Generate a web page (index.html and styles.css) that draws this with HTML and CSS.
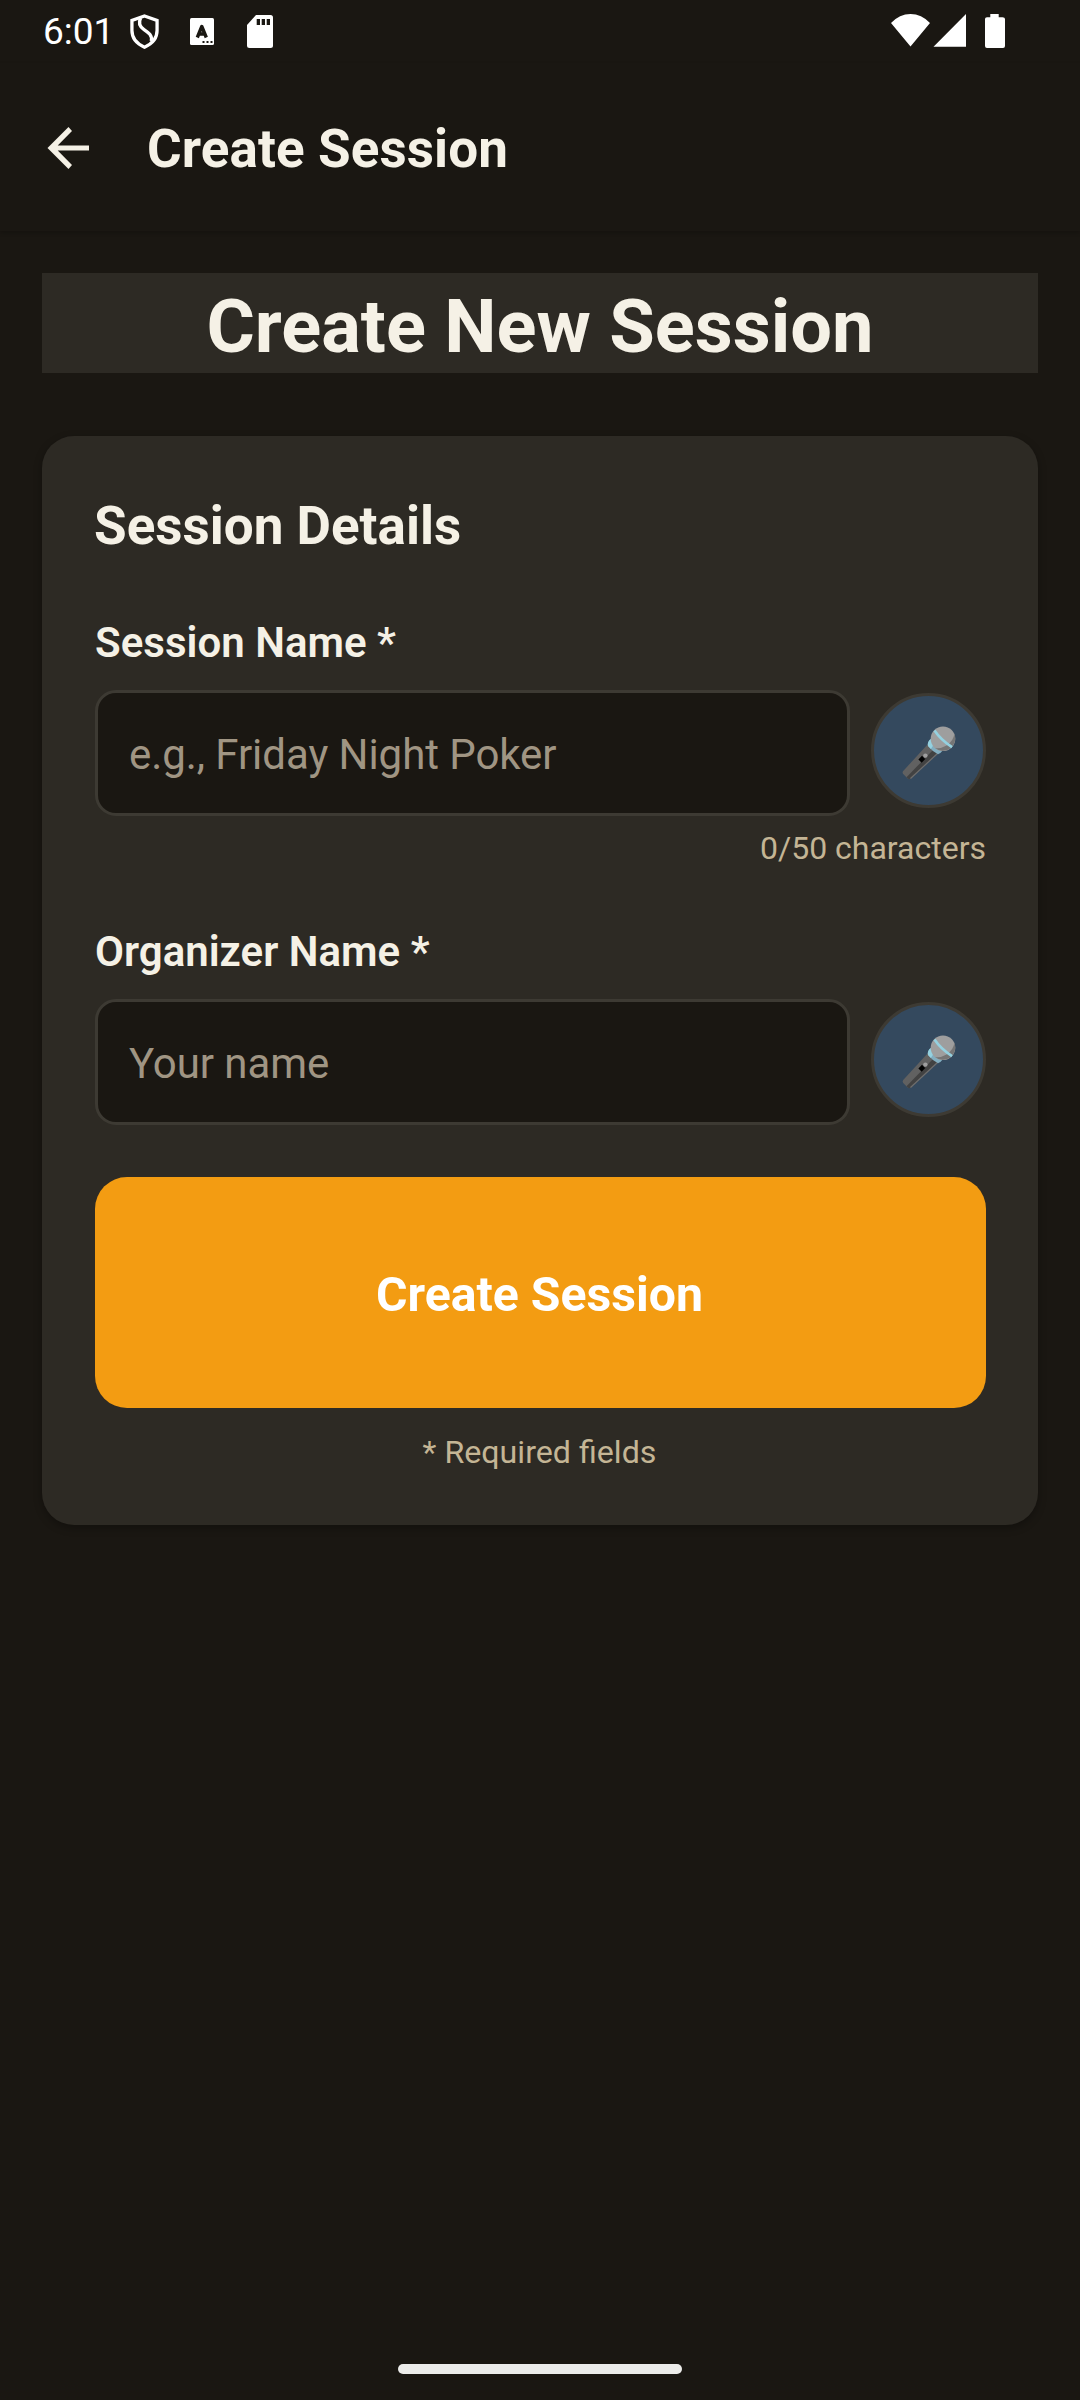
FILE: index.html
```html
<!DOCTYPE html>
<html lang="en">
<head>
<meta charset="utf-8">
<title>Create Session</title>
<link rel="stylesheet" href="styles.css">
</head>
<body>
<svg class="defs" aria-hidden="true">
  <symbol id="mic" viewBox="0 0 54 54">
    <path d="M26 18 1.200 45q-1.200 1.500 0 3l4.500 4.500q1.500 1.300 3 0L36 27.500z" fill="#616161"/>
    <path d="M32 23 4.500 51.200l1.300 1.300q1.500 1.300 3 0L36 27.500z" fill="#424242"/>
    <path d="M35.500 27.500 8.500 52.500" stroke="#6e6e6e" stroke-width="1.200" fill="none"/>
    <path d="M20 29.800l3.200 3.200-3.500 3.700-3.300-3.200z" fill="#000"/>
    <circle cx="23.400" cy="29.600" r="2.200" fill="#9e9e9e"/>
    <path d="M28.500 13q-3.500 3.500-2.500 7 4 5 10 8.200 2.500-.8 5-4z" fill="#82aec0"/>
    <path d="M28.500 13q-3.500 3.500-2.500 7l2.800 3 2.700-4z" fill="#94d1e0"/>
    <circle cx="41" cy="12.700" r="12.300" fill="#9e9e9e"/>
    <path d="M52.300 8A12.300 12.300 0 0 1 33 22q5.500 1 11.500-2.500 7-4.500 7.800-11.500z" fill="#757575"/>
    <path d="M32.500 4.500q6 9 17.500 16.700" stroke="#94d1e0" stroke-width="2.600" fill="none"/>
  </symbol>
</svg>
<div class="screen">
  <header class="status">
    <span class="clock">6:01</span>
    <svg class="shield" viewBox="0 0 30 36"><path d="M15 2 28 6.500V17c0 8-5.500 14-13 17.200C7.500 31 2 25 2 17V6.500z" fill="none" stroke="#fff" stroke-width="3.400"/><path d="M11 4C8.500 9 10 13 14.500 16s9 6 7.500 12" fill="none" stroke="#fff" stroke-width="3.400"/></svg>
    <svg class="letter" viewBox="0 0 24 27"><rect width="24" height="27" rx="1.500" fill="#fff"/><path d="M7.300 19.500 11.800 8.500l4.500 11M9 16h6" fill="none" stroke="#1a1712" stroke-width="3.400" stroke-linejoin="round"/><path d="M12.500 23h2v2h-2zm4 0h2v2h-2zm4 0h2v2h-2z" fill="#1a1712"/></svg>
    <svg class="sdcard" viewBox="0 0 26 33"><path d="M9 0h14.500Q26 0 26 2.500v28Q26 33 23.500 33h-21Q0 33 0 30.500V10z" fill="#fff"/><path d="M9.700 4H13v6H9.700zm5 0H18v6h-3.300zm5 0H23v6h-3.300z" fill="#1a1712"/></svg>
    <svg class="radio" viewBox="0 0 114 34"><path d="M0 9Q8.500 0 19.500 0T39 9L19.500 32.500zM75 0v32.700H42.500zM99.300 0h8.400v3.300h3.800Q114 3.300 114 5v27q0 2-2 2H96q-2 0-2-2V5q0-1.700 2-1.700h3.300z" fill="#fff"/></svg>
  </header>
  <nav class="appbar">
    <svg class="back" viewBox="0 0 42 42"><path d="M41.500 18.400v5.200H10.200L24.500 38 21 42 0 21 21 0l3.500 4L10.200 18.400z" fill="#f5f1e6"/></svg>
    <span class="appbar-title">Create Session</span>
  </nav>
  <main class="content">
    <h1 class="page-title">Create New Session</h1>
    <section class="card">
      <h2 class="card-title">Session Details</h2>
      <label class="label">Session Name *</label>
      <div class="row">
        <div class="input">e.g., Friday Night Poker</div>
        <div class="mic"><svg class="mic-icon"><use href="#mic"/></svg></div>
      </div>
      <p class="counter">0/50 characters</p>
      <label class="label">Organizer Name *</label>
      <div class="row">
        <div class="input">Your name</div>
        <div class="mic"><svg class="mic-icon"><use href="#mic"/></svg></div>
      </div>
      <div class="submit">Create Session</div>
      <p class="note">* Required fields</p>
    </section>
  </main>
  <footer class="gesture"><div class="pill"></div></footer>
</div>
</body>
</html>
```
FILE: styles.css
```css
* { box-sizing: border-box; margin: 0; padding: 0; }
body { background: #1a1712; font-family: Roboto, sans-serif; color: #f5f1e6; }
svg { display: block; flex: none; }
.defs { position: absolute; width: 0; height: 0; }
.screen { width: 1080px; height: 2400px; display: flex; flex-direction: column; overflow: hidden; white-space: nowrap; }

.status { height: 63px; display: flex; align-items: flex-start; padding: 14px 75px 0 43px; color: #fff; }
.clock { width: 87px; font-size: 37px; line-height: 44px; margin-top: -4px; }
.shield { width: 29px; height: 35px; }
.letter { width: 24px; height: 27px; margin: 4px 0 0 31px; }
.sdcard { width: 26px; height: 33px; margin: 1px 0 0 33px; }
.radio { width: 114px; height: 34px; margin-left: auto; }

.appbar { height: 168px; display: flex; align-items: center; padding: 0 48px 0 47px; box-shadow: 0 2px 4px rgba(0, 0, 0, 0.2); }
.back { width: 43px; height: 42px; margin-top: 1px; }
.appbar-title { font-size: 53px; font-weight: 700; letter-spacing: 0.100px; margin-left: 57px; line-height: 62px; padding-top: 4px; }

.content { flex: 1; padding: 42px; }
.page-title { height: 100px; background: #2d2a24; font-size: 74px; font-weight: 700; line-height: 108px; text-align: center; }
.card { margin-top: 63px; height: 1089px; padding: 53px 52px 0 53px; background: #2d2a24; border-radius: 32px; box-shadow: 0 3px 9px rgba(0, 0, 0, 0.3); }
.card-title { font-size: 53px; font-weight: 700; line-height: 75px; margin: 0 0 53px -1px; }
.label { display: block; font-size: 42px; font-weight: 600; letter-spacing: 0.020px; line-height: 52px; margin-bottom: 21px; }
.row { display: flex; gap: 21px; align-items: flex-start; }
.input { flex: 1; height: 126px; border: 3px solid #3d3a33; border-radius: 21px; background: #1a1712; color: #a09583; font-size: 42px; letter-spacing: -0.060px; line-height: 123px; padding-left: 31px; }
.mic { width: 115px; height: 115px; margin-top: 3px; padding-top: 4px; border: 3px solid #3d3a33; border-radius: 50%; background: #34495e; display: flex; align-items: center; justify-content: center; }
.mic-icon { width: 54px; height: 54px; }
.counter { font-size: 32px; line-height: 42px; margin: 11px 0 57px; text-align: right; color: #c4b595; }
.submit { margin-top: 52px; height: 231px; padding-right: 2px; border-radius: 32px; background: #f39c12; color: #fff; font-size: 48.200px; font-weight: 700; line-height: 236px; text-align: center; }
.note { margin-top: 23px; padding-right: 2px; font-size: 32.200px; line-height: 42px; text-align: center; color: #c4b595; }

.gesture { height: 36px; display: flex; justify-content: center; }
.pill { width: 284px; height: 10px; border-radius: 5px; background: #ececea; }
```
